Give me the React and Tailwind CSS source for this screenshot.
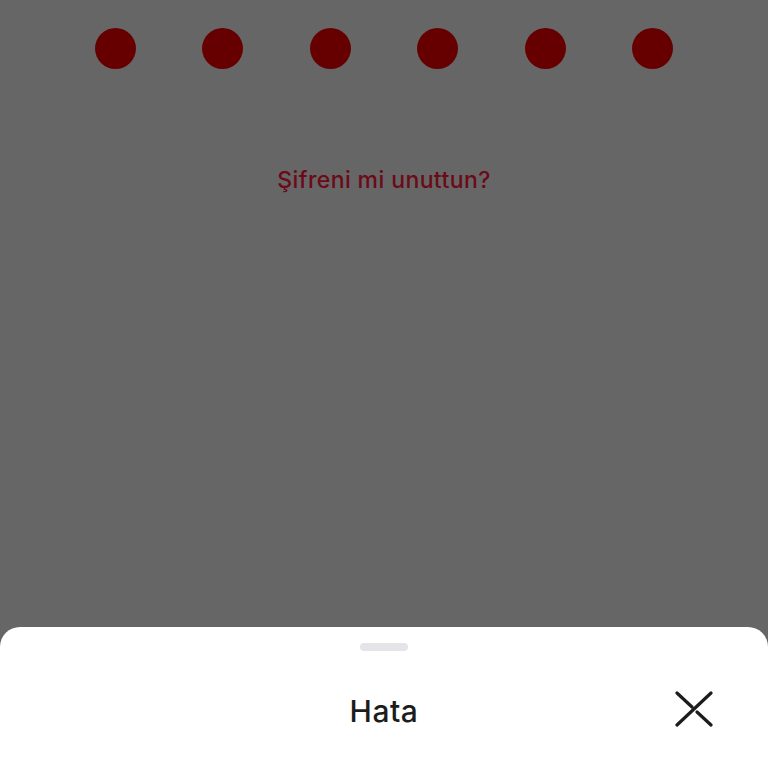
import React from 'react'

const dots = [0, 1, 2, 3, 4, 5]

const CloseIcon = () => (
  <svg width="38" height="36" viewBox="0 0 38 36" fill="none" stroke="#1c1c1c" strokeWidth="3.2" strokeLinecap="round">
    <path d="M36 2 L2 34" />
    <path d="M2 2 L17 16" />
    <path d="M22 21 L36 34" />
  </svg>
)

const App = () => {
  return (
    <div className="w-[768px] h-[768px] bg-[#666666] relative overflow-hidden" style={{ fontFamily: 'Inter, "Noto Sans", sans-serif' }}>
      <div className="flex justify-between px-[95px] pt-[28px]">
        {dots.map((d) => (
          <div key={d} className="w-[41px] h-[41px] rounded-full bg-[#660000]" />
        ))}
      </div>

      <p className="text-center text-[23px] font-medium text-[#6b0a18] mt-[94px] tracking-[0.4px]">
        Şifreni mi unuttun?
      </p>

      <div className="absolute left-0 right-0 top-[627px] bottom-0 bg-white rounded-t-[20px]">
        <div className="flex justify-center pt-[16px]">
          <div className="w-[48px] h-[8px] rounded-full bg-[#e4e4e9]" />
        </div>
        <div className="relative flex items-center justify-center mt-[45px]">
          <span className="text-[30px] font-medium text-[#1c1c1c] leading-none tracking-[0.5px]">Hata</span>
          <div className="absolute left-[675px] top-[-5px]">
            <CloseIcon />
          </div>
        </div>
      </div>
    </div>
  )
}

export default App
